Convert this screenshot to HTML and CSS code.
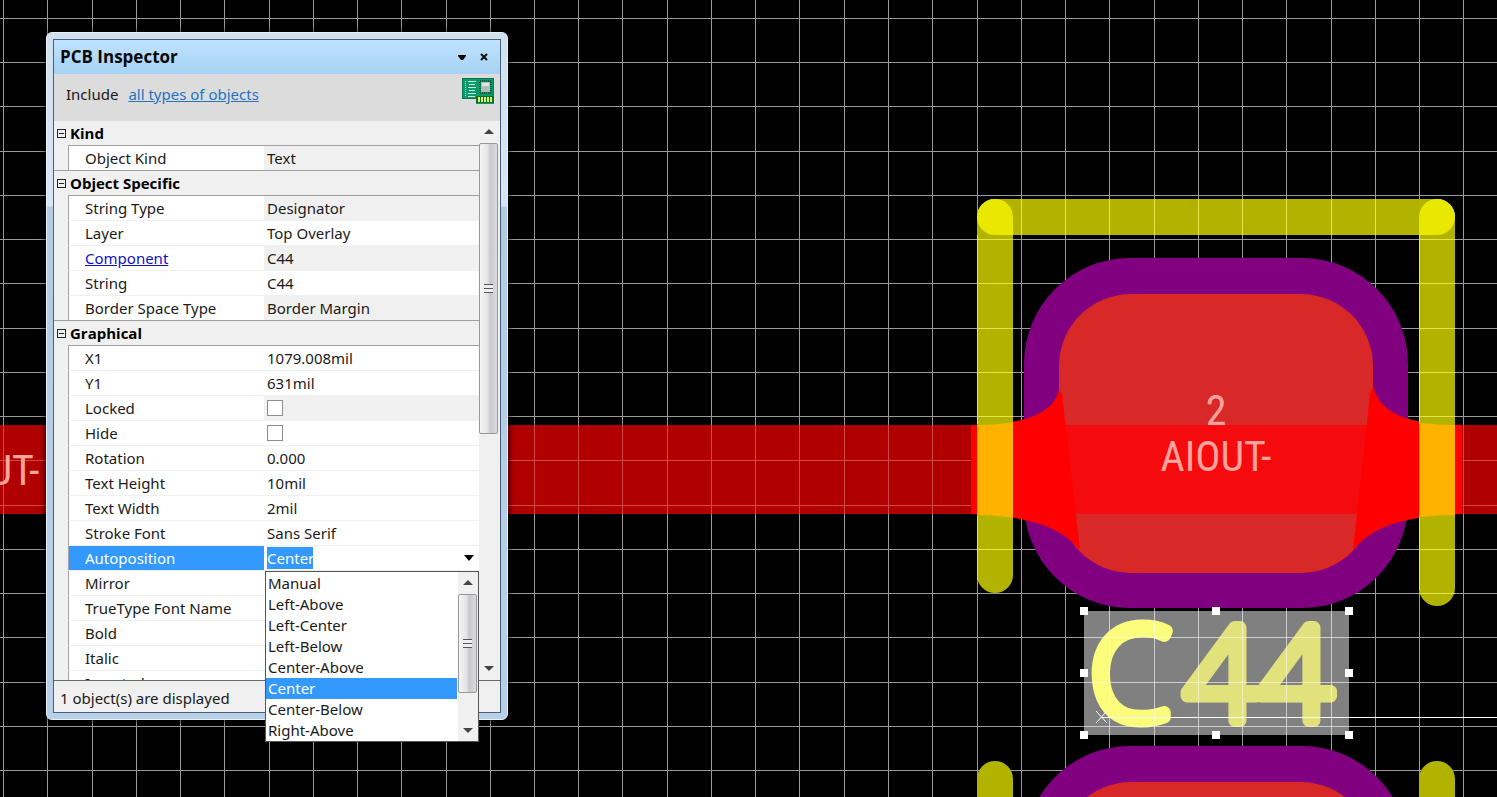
FILE: index.html
```
<!DOCTYPE html>
<html lang="en">
<head>
<meta charset="utf-8">
<title>PCB Inspector</title>
<link rel="stylesheet" href="styles.css">
</head>
<body>
<main class="workspace">
  <svg class="board" aria-label="PCB layout">
    <defs>
      <path id="grid" d="M3.5 0V2000M47.500 0V2000M92.500 0V2000M136.500 0V2000M180.500 0V2000M224.500 0V2000M269.500 0V2000M313.500 0V2000M357.500 0V2000M401.500 0V2000M446.500 0V2000M490.500 0V2000M534.500 0V2000M578.500 0V2000M622.500 0V2000M667.500 0V2000M711.500 0V2000M755.500 0V2000M799.500 0V2000M844.500 0V2000M888.500 0V2000M932.500 0V2000M977.500 0V2000M1021.500 0V2000M1065.500 0V2000M1109.500 0V2000M1154.500 0V2000M1198.500 0V2000M1242.500 0V2000M1286.500 0V2000M1331.500 0V2000M1375.500 0V2000M1419.500 0V2000M1463.500 0V2000M0 18.500H3000M0 62.500H3000M0 106.500H3000M0 151.500H3000M0 195.500H3000M0 239.500H3000M0 283.500H3000M0 328.500H3000M0 372.500H3000M0 416.500H3000M0 460.500H3000M0 505.500H3000M0 549.500H3000M0 593.500H3000M0 637.500H3000M0 682.500H3000M0 726.500H3000M0 770.500H3000"/>
    </defs>
    <rect class="selection" x="1084" y="611" width="265" height="124"/>
    <use href="#grid" class="grid"/>
    <rect class="trace" x="0" y="425" width="100%" height="89"/>
    <use href="#grid" class="grid-over-trace"/>

    <rect class="mask" x="1024" y="258" width="384" height="350" rx="106"/>
    <rect class="pad" x="1059" y="294" width="314" height="279" rx="72"/>
    <rect class="trace-on-pad" x="1059" y="425" width="314" height="89"/>
    <path class="teardrop" d="M971 425C1010 425 1052 419 1059 390L1062 394L1080 550C1060 526 1028 516 971 514Z"/>
    <path class="teardrop" d="M1462 425C1422 424 1381 420 1373 386L1370 394L1353 550C1373 526 1405 516 1462 514Z"/>

    <rect class="mask" x="1024" y="746" width="384" height="350" rx="106"/>
    <rect class="pad" x="1059" y="782" width="314" height="279" rx="72"/>

    <g class="silk">
      <rect x="977" y="199" width="478" height="36" rx="18"/>
      <rect x="977" y="199" width="36" height="394" rx="18"/>
      <rect x="1419" y="199" width="36" height="407" rx="18"/>
      <rect x="977" y="761" width="36" height="400" rx="18"/>
      <rect x="1419" y="761" width="36" height="400" rx="18"/>
    </g>
    <path class="joint" d="M977 217a18 18 0 0 1 36 0V235H995A18 18 0 0 1 977 217Z"/>
    <path class="joint" d="M1455 217a18 18 0 0 0 -36 0V235H1437A18 18 0 0 0 1455 217Z"/>
    <path class="silk-on-copper" d="M977 425Q997 425 1013 422V518Q997 515 977 515ZM1420 423Q1437 425 1455 425V515Q1437 515 1420 517Z"/>
    <path class="silk-grid" d="M977.500 235V424M977.500 516V580M1419.500 235V424M1419.500 516V590M1021.500 199V235M1065.500 199V235M1109.500 199V235M1154.500 199V235M1198.500 199V235M1242.500 199V235M1286.500 199V235M1331.500 199V235M1375.500 199V235M977 239.500H1013M977 283.500H1013M977 328.500H1013M977 372.500H1013M977 416.500H1013M977 549.500H1013M1419 239.500H1455M1419 283.500H1455M1419 328.500H1455M1419 372.500H1455M1419 416.500H1455M1419 549.500H1455M1419 593.500H1455"/>

    <text class="net" x="1216" y="425">2</text>
    <text class="net" x="1216" y="471">AIOUT-</text>
    <text class="net" x="-16" y="485">AIOUT-</text>

    <text class="designator" x="1090" y="720">C<tspan class="digits" x="1184">44</tspan></text>
    <path class="selection-grid" d="M1109.500 611V735M1154.500 611V735M1198.500 611V735M1242.500 611V735M1286.500 611V735M1331.500 611V735M1084 637.500H1349M1084 682.500H1349M1084 726.500H1349"/>
    <path class="origin" d="M1101 717.500H3000"/>
    <path class="origin-mark" d="M1096 711L1107 723M1107 711L1096 723"/>
    <path class="handles" d="M1080 607h8v8h-8zM1212 607h8v8h-8zM1345 607h8v8h-8zM1080 669h8v8h-8zM1345 669h8v8h-8zM1080 731h8v8h-8zM1212 731h8v8h-8zM1345 731h8v8h-8z"/>
  </svg>

  <section class="inspector" aria-labelledby="title">
    <div class="panel">
      <header class="titlebar">
        <h1 id="title">PCB Inspector</h1>
        <button type="button" aria-label="Panel menu"><svg width="10" height="10"><path d="M1 3h8v1L6 8H4L1 4z"/></svg></button>
        <button type="button" aria-label="Close"><svg width="10" height="10"><path class="cross" d="M2 2l6 6M8 2L2 8"/></svg></button>
      </header>
      <div class="include">
        <span>Include</span><a href="#">all types of objects</a>
        <svg class="card" width="32" height="26" aria-hidden="true">
          <path fill="#0a9a6c" d="M0 0h32v26H14v-5H0z"/>
          <path fill="none" stroke="#067a4c" d="M.5 .5h31v17M.5 .5v20H14"/>
          <path stroke="#a5e8c8" stroke-dasharray="1 1" d="M3.500 3v15"/>
          <path stroke="#c8f0dc" d="M6 3.500h8M7 6.500h6M6 9.500h8M7 12.500h6M6 15.500h8M6 18.500h7"/>
          <path stroke="#045c3c" stroke-width="2" stroke-dasharray="1 1" d="M18 3h12M18 15h12M18 4v11M29 4v11"/>
          <path fill="#b4bcbc" d="M19 4h9v10h-9z"/><path fill="#dfe6e6" d="M20 5h7v3h-7z"/>
          <path fill="#16701c" d="M14 18h18v7H14z"/>
          <path stroke="#d8f07c" stroke-width="2" d="M17 19v5M20 19v5M23 19v5M26 19v5M29 19v5"/>
        </svg>
      </div>
      <div class="body">
        <div class="scroller">
          <table class="props">
            <colgroup><col class="c-gutter"><col class="c-name"><col></colgroup>
            <tbody>
              <tr><th colspan="3" class="group"><button type="button" class="toggle" aria-label="Collapse Kind"></button>Kind</th></tr>
              <tr><td class="gutter"></td><th>Object Kind</th><td class="ro">Text</td></tr>
            </tbody>
            <tbody>
              <tr><th colspan="3" class="group"><button type="button" class="toggle" aria-label="Collapse Object Specific"></button>Object Specific</th></tr>
              <tr><td class="gutter"></td><th>String Type</th><td class="ro">Designator</td></tr>
              <tr><td class="gutter"></td><th>Layer</th><td>Top Overlay</td></tr>
              <tr><td class="gutter"></td><th><a href="#">Component</a></th><td class="ro">C44</td></tr>
              <tr><td class="gutter"></td><th>String</th><td>C44</td></tr>
              <tr><td class="gutter"></td><th>Border Space Type</th><td class="ro">Border Margin</td></tr>
            </tbody>
            <tbody>
              <tr><th colspan="3" class="group"><button type="button" class="toggle" aria-label="Collapse Graphical"></button>Graphical</th></tr>
              <tr><td class="gutter"></td><th>X1</th><td>1079.008mil</td></tr>
              <tr><td class="gutter"></td><th>Y1</th><td>631mil</td></tr>
              <tr><td class="gutter"></td><th><label for="locked">Locked</label></th><td class="ro"><input type="checkbox" id="locked"></td></tr>
              <tr><td class="gutter"></td><th><label for="hide">Hide</label></th><td><input type="checkbox" id="hide"></td></tr>
              <tr><td class="gutter"></td><th>Rotation</th><td>0.000</td></tr>
              <tr><td class="gutter"></td><th>Text Height</th><td>10mil</td></tr>
              <tr><td class="gutter"></td><th>Text Width</th><td>2mil</td></tr>
              <tr><td class="gutter"></td><th>Stroke Font</th><td>Sans Serif</td></tr>
              <tr class="active"><td class="gutter"></td><th><label for="autopos">Autoposition</label></th><td><div class="combo"><select id="autopos"><option>Center</option></select><svg width="10" height="6" aria-hidden="true"><path d="M0 0h10L5 6z"/></svg></div></td></tr>
              <tr><td class="gutter"></td><th>Mirror</th><td></td></tr>
              <tr><td class="gutter"></td><th>TrueType Font Name</th><td></td></tr>
              <tr><td class="gutter"></td><th>Bold</th><td></td></tr>
              <tr><td class="gutter"></td><th>Italic</th><td></td></tr>
              <tr><td class="gutter"></td><th>Inverted</th><td></td></tr>
            </tbody>
          </table>
        </div>
        <div class="scrollbar">
          <svg width="10" height="5"><path d="M0 5h10L5 0z"/></svg>
          <div class="thumb tall"><i class="grip"></i></div>
          <svg width="10" height="5"><path d="M0 0h10L5 5z"/></svg>
        </div>
      </div>
      <footer class="status">1 object(s) are displayed</footer>
    </div>
    <div class="dropdown">
      <select size="8" aria-label="Autoposition options">
        <option>Manual</option><option>Left-Above</option><option>Left-Center</option><option>Left-Below</option><option>Center-Above</option><option selected>Center</option><option>Center-Below</option><option>Right-Above</option>
      </select>
      <div class="scrollbar">
        <svg width="10" height="5"><path d="M0 5h10L5 0z"/></svg>
        <div class="thumb"><i class="grip"></i></div>
        <svg width="10" height="5"><path d="M0 0h10L5 5z"/></svg>
      </div>
    </div>
  </section>
</main>
</body>
</html>
```
FILE: styles.css
```
* { box-sizing: border-box; }
body {
  margin: 0;
  background: #000;
  color: #1a1a1a;
  font: 15px/24px "Noto Sans", "Open Sans", sans-serif;
}
button { border: 0; padding: 0; background: none; }

.workspace { position: relative; height: 100vh; overflow: hidden; }
.board { display: block; width: 100%; height: 100%; }
.grid { fill: none; stroke: #9a9a9f; }
.trace { fill: #b00000; }
.grid-over-trace { fill: none; stroke: #d04848; clip-path: inset(425px 0 1486px 0); }
.mask { fill: #800080; }
.pad { fill: #d92828; }
.trace-on-pad { fill: #f50b0d; }
.teardrop { fill: #f00; }
.silk { fill: #b2b200; }
.joint { fill: #e8e800; }
.silk-on-copper { fill: #ffb200; }
.silk-grid { fill: none; stroke: #e6e64c; }
.net {
  fill: #ffa49c;
  font: 42px "Liberation Sans Narrow", "Arial Narrow", "Roboto Condensed", "Liberation Sans", sans-serif;
  text-anchor: middle;
}
.selection { fill: #808080; }
.selection-grid { fill: none; stroke: #fff; stroke-opacity: .5; }
.designator {
  fill: #fbfb7c;
  stroke: #fbfb7c;
  stroke-width: 13px;
  stroke-linejoin: round;
  font: 200 130px "Noto Sans", sans-serif;
}
.digits { fill: #e2e27d; stroke: #e2e27d; }
.origin { stroke: #fff; }
.origin-mark { stroke: #fff; }
.handles { fill: #fff; }

.inspector {
  position: absolute;
  left: 46px;
  top: 32px;
  width: 462px;
  padding: 6px;
  border: 1px solid #e6f2fa;
  border-radius: 6px;
  background: linear-gradient(#d2e0ee 0, #d6e6f4 173px, #b3cce4 174px, #b8cfe8 100%);
  box-shadow: 0 0 6px #000;
}
.panel { border: 1px solid #46607c; background: #f0f0f0; }
.titlebar {
  display: flex;
  align-items: center;
  height: 34px;
  padding: 0 11px 0 6px;
  gap: 12px;
  background: linear-gradient(#bfe3ff, #a6d2f3);
}
.titlebar h1 { flex: 1; margin: 0; font-size: 17px; font-family: "Open Sans", sans-serif; font-weight: 700; color: #080808; }
.titlebar button { display: flex; }
.cross { fill: none; stroke: #111; stroke-width: 2px; }
.include {
  display: flex;
  align-items: flex-start;
  height: 47px;
  padding: 4px 6px 0 12px;
  background: #dcdcdc;
}
.include span, .include a { margin-top: 4px; }
.include a { margin-left: 10px; color: #2474c0; }
.card { margin-left: auto; }

.body { display: flex; height: 560px; border-bottom: 1px solid #686868; }
.scroller { flex: 1; overflow: hidden; }
.props { width: 100%; border-collapse: separate; border-spacing: 0; table-layout: fixed; }
.c-gutter { width: 14px; }
.c-name { width: 196px; }
.props tr { height: 25px; }
.props th, .props td { padding: 0 0 0 3px; height: 25px; line-height: 24px; text-align: left; font-weight: 400; background: #fff; border-bottom: 1px solid #f0f0f0; white-space: nowrap; }
.props th { padding-left: 16px; border-left: 1px solid #a0a0a0; }
.props th a { color: #1010c8; }
.props .gutter { padding: 0; background: #f0f0f0; }
.props .group {
  padding-left: 3px;
  border-left: 0;
  border-bottom: 1px solid #a0a0a0;
  border-image: linear-gradient(90deg, #f0f0f0 14px, #a0a0a0 14px) 0 0 1 0;
  background: #f0f0f0;
  font-family: "Open Sans", sans-serif;
  font-weight: 700;
  color: #000;
}
.props tbody:not(:last-child) tr:last-child > * { border-bottom: 1px solid #a0a0a0; }
.props .ro { background: #f0f0f0; }
.toggle {
  display: inline-block;
  width: 9px;
  height: 9px;
  margin-right: 4px;
  vertical-align: 2px;
  border: 1px solid #222;
  background: linear-gradient(#222, #222) center / 5px 1px no-repeat;
}
input[type="checkbox"] {
  display: block;
  appearance: none;
  width: 16px;
  height: 16px;
  margin: 0;
  border: 1px solid #8c8c8c;
  background: #fff;
}
.props .active th { background: #3399ff; color: #fff; }
.combo { display: flex; align-items: center; height: 24px; padding-right: 5px; }
.combo select {
  flex: 1;
  height: 22px;
  padding: 0;
  border: 0;
  appearance: none;
  font: inherit;
  line-height: 22px;
  color: #fff;
  background: linear-gradient(#3399ff, #3399ff) 0 0 / 46px 22px no-repeat;
}

.scrollbar {
  display: flex;
  flex-direction: column;
  align-items: center;
  width: 21px;
  padding: 8px 2px 9px 0;
  background: #f0f0f0;
}
.scrollbar svg { fill: #444; }
.scrollbar svg:last-child { margin-top: auto; }
.thumb {
  display: flex;
  align-items: center;
  justify-content: center;
  width: 19px;
  height: 99px;
  margin-top: 9px;
  border: 1px solid #989898;
  border-radius: 2px;
  background: linear-gradient(90deg, #f5f5f5, #e4e4e6 45%, #c8c8cc 60%, #dcdcde);
}
.thumb.tall { height: 291px; }
.grip { width: 9px; height: 9px; background: repeating-linear-gradient(#555 0 1px, #eee 1px 4px); }
.status { height: 31px; padding: 5px 6px 0; line-height: 24px; }

.dropdown {
  position: absolute;
  left: 218px;
  top: 538px;
  width: 214px;
  height: 171px;
  display: flex;
  border: 1px solid #555;
  background: #fff;
}
.dropdown select {
  flex: 1;
  height: 168px;
  margin: 1px 1px 0 0;
  padding: 0;
  border: 0;
  border-radius: 0;
  outline: 0;
  overflow: hidden;
  font: inherit;
  scrollbar-width: none;
  background: #fff;
}
.dropdown option { height: 21px; min-height: 21px; padding: 0 2px; line-height: 21px; color: #1a1a1a; }
.dropdown option:checked { background: linear-gradient(#3399ff, #3399ff); color: #fff; }
.dropdown .scrollbar { width: 20px; padding: 8px 1px 8px 0; }
```
